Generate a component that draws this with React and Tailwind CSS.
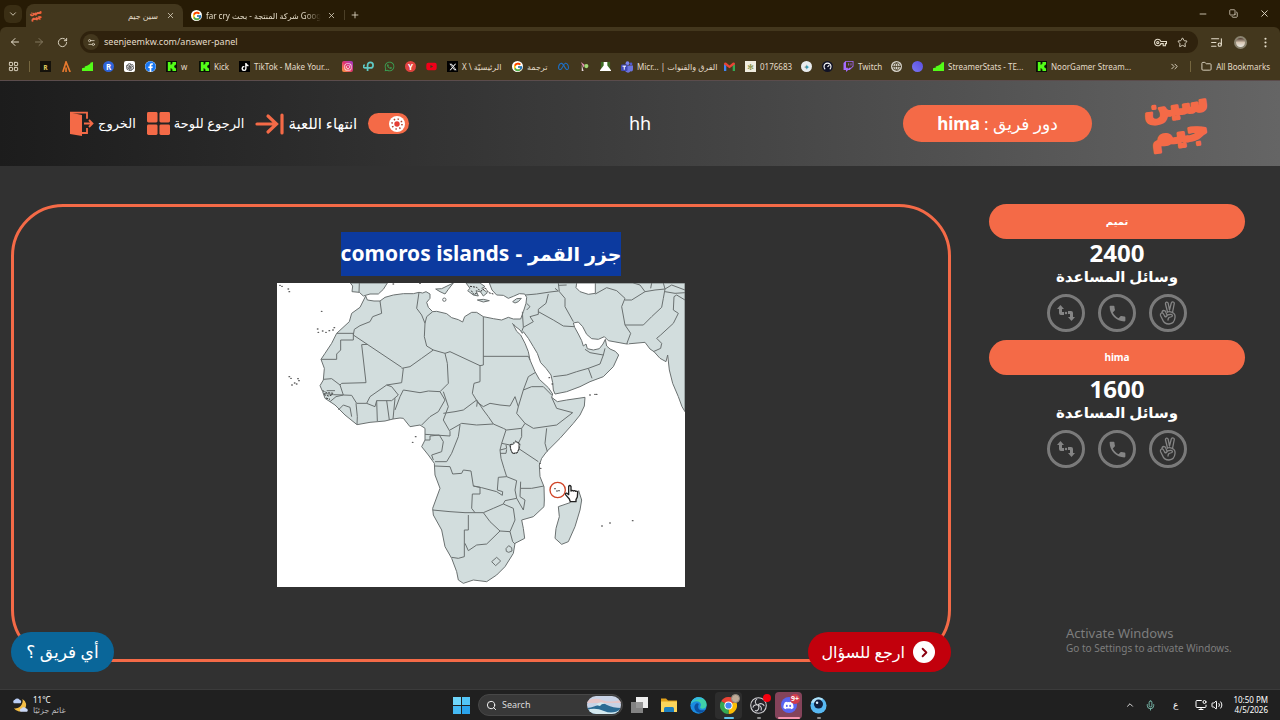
import {
	ArrowLeft,
	ArrowRight,
	ChevronDown,
	ChevronRight,
	ChevronUp,
	ChevronsRight,
	Copy,
	EllipsisVertical,
	Folder,
	Globe,
	LayoutGrid,
	ListMusic,
	Mic,
	Minus,
	MonitorDot,
	Plus,
	RotateCw,
	Search,
	Settings2,
	Star,
	Volume2,
	X,
} from 'lucide-react'
import React, { useState } from 'react'
import { AiOutlineOpenAI } from 'react-icons/ai'
import { FaDiscord, FaFacebook, FaTiktok, FaTwitch, FaWhatsapp, FaYoutube } from 'react-icons/fa'
import { FaInstagram, FaMeta, FaXTwitter } from 'react-icons/fa6'
import { FcGoogle } from 'react-icons/fc'
import { MdOutlineVpnKey, MdPhone } from 'react-icons/md'

/* ---------- small brand icons ---------- */

const KickIcon = () => (
	<svg viewBox="0 0 12 12" className="h-[11px] w-[11px] shrink-0">
		<rect width="12" height="12" fill="#0a0f06" />
		<path d="M2 1h3v3h1V3h1V1h4v3h-1v1H9v2h1v1h1v3H7V9H6V8H5v3H2z" fill="#53fc18" />
	</svg>
)

const StatsIcon = () => (
	<svg viewBox="0 0 12 12" className="h-[11px] w-[11px] shrink-0">
		<path d="M0 8l3-1v4H0zM3 6l3-1v6H3zM6 5l3-2v8H6zM9 2l3-1v10H9z" fill="#53fc18" />
	</svg>
)

const TeamsIcon = () => (
	<svg viewBox="0 0 12 12" className="h-[12px] w-[12px] shrink-0">
		<circle cx="6.500" cy="2.200" r="1.900" fill="#7b83eb" />
		<circle cx="10" cy="3" r="1.400" fill="#5059c9" />
		<path d="M4 4.500h8v4a2 2 0 0 1-2.500 1.800A3 3 0 0 1 4 9z" fill="#6b73dd" />
		<rect y="3.500" width="6.500" height="6.500" rx="1" fill="#4048b5" />
		<path d="M1.500 5.200h3.500M3.250 5.200v3.500" stroke="#fff" />
	</svg>
)

const GmailIcon = () => (
	<svg viewBox="0 0 12 12" className="h-[11px] w-[11px] shrink-0">
		<path d="M0 3v8h2.500V5z" fill="#4285f4" />
		<path d="M12 3v8H9.500V5z" fill="#34a853" />
		<path d="M0 3.500V3q.5-2 2.500-1L6 4.800 9.500 2Q11.500 1 12 3v.5L6 8z" fill="#ea4335" />
	</svg>
)

const ChromeIcon = () => (
	<svg viewBox="0 0 24 24" className="h-[17px] w-[17px]">
		<path d="M12 12L1.600 6A12 12 0 0 1 22.400 6z" fill="#ea4335" />
		<path d="M12 12L22.400 6A12 12 0 0 1 12 24z" fill="#fbbc05" />
		<path d="M12 12L12 24A12 12 0 0 1 1.600 6z" fill="#34a853" />
		<circle cx="12" cy="12" r="5.800" fill="#fff" />
		<circle cx="12" cy="12" r="4.400" fill="#4285f4" />
	</svg>
)

const EdgeIcon = () => (
	<svg viewBox="0 0 24 24" className="h-[17px] w-[17px]">
		<circle cx="12" cy="12" r="11.500" fill="#1a8be0" />
		<path d="M1 10C3 2 9 .5 12 .5c7 0 11.500 5 11.500 10 0 4-3 6-6 6-2.500 0-3.500-1.500-3-2.500 3-4-1-8-5-8-4 0-7 2-8.500 4z" fill="#3fd0a8" />
		<path d="M1 10C3 3 8 .5 12 .5c3 0 6 1 8 3-6-2-14 0-19 6.500z" fill="#35b8e6" />
		<path d="M9 9c-5 3-3 11 3 13 4 1 8-1 9.500-4-5 2-10 0-10-4 0-2 .5-3 1-4-1-1-2-1.500-3.500-1z" fill="#0c4f9f" />
	</svg>
)

const ExplorerIcon = () => (
	<svg viewBox="0 0 18 16" className="h-[16px] w-[18px]">
		<path d="M1 1.500h5l2 2h9V15H1z" fill="#e3a21a" />
		<path d="M1 4.500h16V15H1z" fill="#fbd55c" />
		<path d="M4 15v-3.500Q4 10 5.500 10h7q1.500 0 1.500 1.500V15z" fill="#1d7fbf" />
	</svg>
)

const ObsIcon = () => (
	<svg viewBox="0 0 24 24" className="h-[17px] w-[17px]">
		<circle cx="12" cy="12" r="11" fill="#24242a" stroke="#d5d5d8" strokeWidth="1.500" />
		<path d="M10 3c-4 2-3 7 1 8.500M20 13c-1-4-6-5-9-1.500M7 19c4 2 7-3 4.500-7.500M12 12c3 0 5 3 3.500 7M12 12C9 10 5 11 4 15" fill="none" stroke="#d5d5d8" strokeWidth="1.500" />
	</svg>
)

const WeatherIcon = () => (
	<svg viewBox="0 0 18 18" className="h-[17px] w-[17px]">
		<path d="M11 2a7 7 0 1 1-9 10 8 8 0 0 0 9-10z" fill="#f3bd45" />
		<path d="M2 6.500a2 2 0 0 1 1-3.500 3 3 0 0 1 5 0 2 2 0 0 1 1 3.500z" fill="#b9cdf5" />
		<path d="M9 15.500a1.800 1.800 0 0 1 1-3.200 3 3 0 0 1 5 0 1.800 1.800 0 0 1 1 3.200z" fill="#cbd9f7" />
	</svg>
)

const Logo = ({ className }) => (
	<svg viewBox="0 0 66 66" className={`overflow-visible ${className}`} role="img" aria-label="سين جيم">
		<g transform="rotate(-8 33 33)" fill="#f46a47" stroke="#f46a47" strokeWidth="3" strokeLinejoin="round">
			<text x="33" y="23" fontSize="28" fontWeight="700" textAnchor="middle" fontFamily="DejaVu Sans, sans-serif">
				سين
			</text>
			<text x="33" y="51" fontSize="30" fontWeight="700" textAnchor="middle" fontFamily="DejaVu Sans, sans-serif">
				جيم
			</text>
		</g>
	</svg>
)

/* ---------- browser ---------- */

const RoundBadge = ({ className, children }) => (
	<span className={`flex h-[11px] w-[11px] shrink-0 items-center justify-center text-[8px] leading-none font-bold ${className}`}>
		{children}
	</span>
)

const bookmarks = [
	{ name: 'Rewards', icon: <RoundBadge className="bg-[#15120b] text-[#d9c15a]">ʀ</RoundBadge> },
	{
		name: 'Arc',
		icon: (
			<svg viewBox="0 0 12 12" className="h-[11px] w-[11px]">
				<path d="M2 12L5.500 1l4.500 11M5.500 12V7" fill="none" stroke="#e8792e" strokeWidth="1.800" />
			</svg>
		),
	},
	{ name: 'Stats', icon: <StatsIcon /> },
	{ name: 'R', icon: <RoundBadge className="rounded-full bg-[#2e63d8] text-white">R</RoundBadge> },
	{ name: 'ChatGPT', icon: <RoundBadge className="rounded-xs bg-white text-[10px] text-[#222]"><AiOutlineOpenAI /></RoundBadge> },
	{ name: 'Facebook', icon: <RoundBadge className="rounded-full bg-white text-[11px] text-[#1877f2]"><FaFacebook /></RoundBadge> },
	{ name: 'w', text: 'w', width: 'w-[8px]', icon: <KickIcon /> },
	{ name: 'Kick', text: 'Kick', width: 'w-[15px]', icon: <KickIcon /> },
	{ name: 'TikTok', text: 'TikTok - Make Your...', width: 'w-[78px]', icon: <RoundBadge className="bg-black text-white"><FaTiktok /></RoundBadge> },
	{ name: 'Instagram', icon: <RoundBadge className="rounded-xs bg-linear-to-tr from-[#fd9a2b] via-[#e1306c] to-[#9b30c9] text-white"><FaInstagram /></RoundBadge> },
	{
		name: 'P',
		icon: (
			<svg viewBox="0 0 12 12" className="h-[11px] w-[11px]">
				<path d="M5 11V4.500A3 3 0 1 1 8 7.500H2a1.500 1.500 0 0 1 0-3" fill="none" stroke="#5fc9c4" strokeWidth="1.900" />
			</svg>
		),
	},
	{ name: 'WhatsApp', icon: <FaWhatsapp className="h-[11px] w-[11px] text-[#3aa757]" /> },
	{ name: 'Y', icon: <RoundBadge className="rounded-full bg-[#e0433f] text-white">Y</RoundBadge> },
	{ name: 'YouTube', icon: <FaYoutube className="h-[11px] w-[11px] text-[#f00019]" /> },
	{ name: 'X', text: 'X \\ الرئيسيّة', width: 'w-[40px]', icon: <RoundBadge className="bg-black text-white"><FaXTwitter /></RoundBadge> },
	{ name: 'Translate', text: 'ترجمة', width: 'w-[21px]', icon: <RoundBadge className="rounded-full bg-white text-[10px]"><FcGoogle /></RoundBadge> },
	{ name: 'Meta', icon: <FaMeta className="h-[11px] w-[11px] text-[#1d6fc4]" /> },
	{
		name: 'Plant',
		icon: (
			<svg viewBox="0 0 12 12" className="h-[11px] w-[11px]">
				<path d="M2 1l4 3-1 3z" fill="#e58fb5" />
				<circle cx="8" cy="5.500" r="2.300" fill="#a3d977" />
				<path d="M3 4l2 7H3z" fill="#e9d9e0" />
			</svg>
		),
	},
	{
		name: 'Garden',
		icon: (
			<svg viewBox="0 0 12 12" className="h-[11px] w-[11px]">
				<path d="M1 1h10v10H1z" fill="#3c6b22" />
				<path d="M4 1h4v4l4 5v1H0v-1l4-5z" fill="#fff" />
			</svg>
		),
	},
	{ name: 'Teams', text: 'Micr... | الفرق والقنوات', width: 'w-[77px]', icon: <TeamsIcon /> },
	{ name: 'Gmail', icon: <GmailIcon /> },
	{ name: '0176683', text: '0176683', width: 'w-[31px]', icon: <RoundBadge className="bg-[#f0ecdf] text-[#7c8a35]">✻</RoundBadge> },
	{ name: 'School', icon: <RoundBadge className="rounded-full bg-[#e9ecee] text-[#3c94a3]">✦</RoundBadge> },
	{
		name: 'Speed',
		icon: (
			<svg viewBox="0 0 12 12" className="h-[11px] w-[11px]">
				<circle cx="6" cy="6" r="6" fill="#111326" />
				<path d="M3.500 9A3.800 3.800 0 1 1 8.500 9M6 6.500L8 4.500" fill="none" stroke="#fff" strokeWidth="1.200" />
			</svg>
		),
	},
	{ name: 'Twitch', text: 'Twitch', width: 'w-[23px]', icon: <FaTwitch className="h-[11px] w-[11px] shrink-0 text-[#a56bff]" /> },
	{ name: 'Web', icon: <RoundBadge className="rounded-full bg-[#d5d2ca] text-[#3f3419]"><Globe size={9} /></RoundBadge> },
	{ name: 'Sphere', icon: <RoundBadge className="rounded-full bg-linear-to-bl from-[#5a4de0] to-[#7b76f2]" /> },
	{ name: 'StreamerStats', text: 'StreamerStats - TE...', width: 'w-[78px]', icon: <StatsIcon /> },
	{ name: 'NoorGamer', text: 'NoorGamer Stream...', width: 'w-[82px]', icon: <KickIcon /> },
]

const Browser = () => (
	<header className="bg-[#271b05] font-['Noto_Sans','DejaVu_Sans',sans-serif] text-[9px] text-[#e4dcc9]">
		<div className="flex h-[27px] items-end">
			<button aria-label="Search tabs" className="mb-1 ml-1 flex h-[18px] w-[18px] items-center justify-center rounded-md bg-[#3a2e14]">
				<ChevronDown size={10} />
			</button>
			<div className="ml-1 flex h-[23px] w-[157px] items-center rounded-t-lg bg-[#43371d] px-1">
				<Logo className="h-[12px] w-[12px]" />
				<span dir="rtl" className="ml-auto text-[8px]">سين جيم</span>
				<button aria-label="Close tab" className="mr-1 ml-2">
					<X size={9} />
				</button>
			</div>
			<div className="flex h-[23px] w-[153px] items-center pl-2">
				<RoundBadge className="rounded-full bg-white text-[10px]">
					<FcGoogle />
				</RoundBadge>
				<span className="ml-1 mask-r-from-85% text-[8px] whitespace-nowrap">far cry شركة المنتجة - بحث Goog</span>
				<button aria-label="Close tab" className="ml-auto">
					<X size={9} />
				</button>
			</div>
			<button aria-label="New tab" className="mb-[7px] ml-2 border-l border-[#4b3f27] pl-[5px]">
				<Plus size={10} />
			</button>
			<div className="mr-[10px] mb-2 ml-auto flex gap-[21px]">
				<button aria-label="Minimize"><Minus size={10} /></button>
				<button aria-label="Restore"><Copy size={9} className="rotate-90 -scale-x-100" /></button>
				<button aria-label="Close"><X size={11} /></button>
			</div>
		</div>

		<div className="rounded-t-md bg-[#43371d] pt-1">
			<div className="flex h-[22px] items-center pr-2 pl-[9px]">
				<button aria-label="Back" className="mr-3"><ArrowLeft size={12} /></button>
				<button aria-label="Forward" className="mr-3 text-[#83785f]"><ArrowRight size={12} /></button>
				<button aria-label="Reload" className="mr-3"><RotateCw size={11} /></button>
				<div className="flex h-[22px] flex-1 items-center rounded-full bg-[#2f220d] pr-[10px] pl-[3px]">
					<span className="flex h-[16px] w-[16px] items-center justify-center rounded-full bg-[#43371d]">
						<Settings2 size={9} />
					</span>
					<input
						aria-label="Address"
						className="ml-[5px] flex-1 bg-transparent text-[9px] outline-none"
						defaultValue="seenjeemkw.com/answer-panel"
					/>
					<MdOutlineVpnKey size={13} className="mr-[10px]" />
					<Star size={11} />
				</div>
				<ListMusic size={13} className="mr-[11px] ml-3" />
				<span className="mr-3 h-[13px] w-[13px] rounded-full border-2 border-[#8b8470] bg-linear-to-b from-[#4e3b30] via-[#d8c6b2] to-[#e9e9e4]" />
				<EllipsisVertical size={13} />
			</div>
			<nav className="flex h-[27px] items-center gap-[10px] pr-[10px] pl-2">
				<LayoutGrid size={11} className="shrink-0" />
				<span className="h-[11px] w-px bg-[#75663f]" />
				{bookmarks.map((item) => (
					<a key={item.name} href="#" aria-label={item.name} className="flex shrink-0 items-center gap-1">
						{item.icon}
						{item.text && <span className={`text-[8px] whitespace-nowrap ${item.width}`}>{item.text}</span>}
					</a>
				))}
				<ChevronsRight size={11} className="ml-auto shrink-0" />
				<span className="h-[11px] w-px bg-[#75663f]" />
				<a href="#" className="flex shrink-0 items-center gap-1 text-[8px] whitespace-nowrap">
					<Folder size={11} />
					All Bookmarks
				</a>
			</nav>
		</div>
	</header>
)

/* ---------- game header ---------- */

const GameHeader = ({ team }) => {
	const [light, setLight] = useState(true)

	return (
		<div className="grid h-[86px] grid-cols-[1fr_auto_1fr] items-center border-t border-[#5b4c4c] bg-linear-to-r from-[#1c1c1c] to-[#656565] px-[69px]">
			<div className="flex items-center gap-[11px] text-[13px] whitespace-nowrap text-white">
				<a href="#" className="flex items-center gap-1">
					<svg viewBox="0 0 25 25" className="h-[25px] w-[25px]">
						<path d="M1 1.500L13 4v21L1 23z" fill="#f46a47" />
						<path d="M1 1.700h17v6M12 22h6v-5" fill="none" stroke="#f46a47" strokeWidth="1.800" />
						<path d="M15 12.500h8M20 9l3.500 3.500L20 16" fill="none" stroke="#f46a47" strokeWidth="1.800" />
					</svg>
					الخروج
				</a>
				<a href="#" className="flex items-center gap-1">
					<svg viewBox="0 0 24 24" className="h-[23px] w-[23px]" fill="#f46a47">
						<rect width="11" height="11" rx="1.500" />
						<rect x="13" width="11" height="11" rx="1.500" />
						<rect y="13" width="11" height="11" rx="1.500" />
						<rect x="13" y="13" width="11" height="11" rx="1.500" />
					</svg>
					الرجوع للوحة
				</a>
				<a href="#" className="flex items-center gap-1 text-[15px]">
					<svg viewBox="0 0 29 22" className="h-[22px] w-[29px]" fill="none" stroke="#f46a47" strokeWidth="3.200" strokeLinecap="round">
						<path d="M2 11h19M13 3l8.500 8-8.500 8M27 2v18" />
					</svg>
					انتهاء اللعبة
				</a>
				<label className={`flex h-[21px] w-[41px] cursor-pointer items-center rounded-full bg-[#f46a47] px-1 ${light ? 'justify-end' : ''}`}>
					<input type="checkbox" aria-label="Theme" className="sr-only" checked={light} onChange={() => setLight(!light)} />
					<svg viewBox="0 0 16 16" className="h-[16px] w-[16px]">
						<circle cx="8" cy="8" r="8" fill="#fff" />
						<circle cx="8" cy="8" r="2.700" fill="#e53d33" />
						<circle cx="8" cy="8" r="5" fill="none" stroke="#b0442e" strokeWidth="1.600" strokeDasharray="1.400 2.527" />
					</svg>
				</label>
			</div>
			<h1 className="text-[18px] text-white">hh</h1>
			<div className="flex items-center justify-end gap-[53px]">
				<div dir="rtl" className="flex h-[37px] w-[189px] items-center justify-center gap-1 rounded-full bg-[#f46a47] text-[17px] text-white">
					دور فريق : <strong>{team}</strong>
				</div>
				<Logo className="h-[66px] w-[66px]" />
			</div>
		</div>
	)
}

/* ---------- map ---------- */

const land = [
	// Africa, the Middle East and south Asia in one outline
	'M287 228L292 240 312 243 330 243 345 232 370 225 400 221 430 221 447 217 458 219 468 215 480 222 480 235 470 247 475 262 488 275 500 274 530 281 545 293 565 299 578 306 584 290 605 277 620 277 640 290 670 296 695 300 715 292 730 297 752 297 760 275 768 250 770 232 764 222 748 221 730 229 715 235 700 226 680 225 666 210 658 189H1245V575L1236 560 1225 530 1208 490 1198 450 1193 405 1188 425 1170 415 1152 395 1140 387 1125 367 1070 372 1015 362 1003 350 985 358 965 356 950 343 938 320 925 306 910 309 914 322 925 342 935 362 940 378 948 372 952 386 970 390 988 386 999 372 1006 358 1010 378 1020 387 1036 394 1046 405 1030 440 1000 470 960 485 930 500 890 515 855 522 850 510 848 488 843 465 828 445 812 428 802 400 790 380 775 355 760 335 757 340 750 330 737 320 728 310 740 334 752 345 765 370 775 395 780 420 795 455 808 478 835 503 848 522 845 532 862 545 890 540 945 532 943 558 930 585 910 610 870 655 830 695 815 715 808 735 810 770 822 800 823 840 822 860 790 890 755 900 760 925 764 955 735 970 730 1000 705 1040 680 1065 650 1085 610 1080 580 1090 565 1080 560 1055 545 1015 525 980 515 930 490 885 488 865 510 805 495 765 493 730 475 705 455 680 465 660 465 625 450 615 420 620 400 595 390 594 369 597 345 603 300 607 261 614 225 585 195 555 180 545 165 535 158 515 150 497 160 480 163 445 153 418 165 400 185 370 200 340 238 305 245 280 270 262Z',
	'M241 189L248 198 246 215 268 217 280 228 300 222 325 222 340 208 352 189Z',
	'M926 812L935 840 930 870 915 920 895 965 875 973 855 955 858 925 868 890 865 860 900 848 920 820Z',
	'M497 207L515 206 550 189 535 208 525 222 510 215Z',
	'M588 189L600 205 593 212 610 225 625 228 618 212 632 216 640 228 652 218 635 205 645 200 630 189Z',
	'M622 240L640 238 658 242 640 246ZM728 245L740 236 754 235 745 245 735 249Z',
]

const water = [
	'M920 189L918 203 930 215 955 223 976 220 976 189Z',
	'M720 675L730 673 737 665 750 672 748 684 742 698 728 700 722 690Z',
]

const borders = [
	'M330 243L335 280 308 290 300 305 270 317 253 328 250 345 395 442',
	'M200 340H250V360H212V390L200 402V418H153',
	'M395 445L420 440 455 415 490 390 525 400 540 395 630 437 640 435V290M640 409H775',
	'M490 390L470 378 463 350 465 310 455 285 440 265 447 217M465 310L470 290 488 275',
	'M292 373L275 374 288 488 215 490 210 495 185 476 160 478',
	'M210 495L220 525 190 524 160 520M170 512H195M220 525L245 526 260 550 290 550 300 530 350 495 395 488 400 445',
	'M290 550L315 560 320 542 365 542 385 525 365 500 350 495M320 542L322 603M350 542L358 600M375 535L369 597M258 550L262 590 261 613M205 570L220 555 240 562 245 590M180 545L198 530 220 525',
	'M375 570L390 530 400 510 450 518 475 513 510 515 535 490 532 430 525 400M510 515L525 540 505 575 480 590 455 615M520 515L535 560 520 600 540 635 540 648 465 643',
	'M520 580L555 575 580 570 620 540 640 570 655 590 670 612 620 615 575 610 540 630M630 437V485L612 490 607 520 622 545 620 560M620 545L640 560 660 550 690 555 720 558 735 530 745 560',
	'M745 560L740 580 765 610 790 625 825 620 860 615 908 578 860 565 845 532M745 560L760 510 785 500 820 500 845 525M760 510L775 470 795 458',
	'M670 612L700 625 710 630 755 625 765 610M755 625L755 650 745 670M830 625L825 670 832 695M745 685L805 725M708 630L695 670 690 690 693 715 702 745 710 770M690 690L710 685 708 675M690 700L708 700 710 688M695 670L720 675',
	'M710 770L685 772 682 810 698 815 697 826 680 815 635 803 610 798M710 770L740 782 735 810 740 835 760 870 765 840 750 830 752 785M752 805L785 805 822 798M740 835L705 842 700 852',
	'M495 738L540 740 548 762 575 760 580 750 603 753 610 798 630 802V822H607L605 865 615 878M495 725L530 725 545 700 565 650 570 615M465 660H480V648L508 645 520 665 515 695 485 705 490 720',
	'M488 870L540 875 585 878 640 878 670 865 700 852 730 865 735 900 720 935 690 933 660 905 640 878M595 885V930H583V1010L565 1015 545 1012M585 970L595 992 620 975 650 972 690 933M720 935L728 965 735 972',
	'M665 1025L680 1012 692 1023 677 1037ZM708 986l8-9 9 6 1 10-10 4-7-3Z',
	'M766 225L800 222 840 216 865 213M835 222L828 250 805 268 805 283 780 290 790 305 760 322M770 270L780 260 770 250M805 275L850 300 880 318 912 320M865 189L868 215 885 235 885 260 910 305M757 275L760 322 755 335',
	'M976 222L1010 203 1040 212 1065 235 1055 260 1065 315 1082 340 1070 372M1065 315L1120 315 1145 290 1175 262 1180 235 1185 207 1155 210 1125 215 1085 240 1065 240',
	'M1245 240L1220 225 1212 230 1210 270 1225 280 1210 310 1172 345 1160 355 1175 370 1172 385 1150 395M1125 215L1110 195 1090 189M1185 215L1215 220 1245 218M1185 207L1205 195 1245 210M1180 189L1185 207M890 195L865 196M1145 189L1142 205',
	'M850 470L890 465 920 455 955 445 990 432 1000 405 1005 385M955 445L966 475M945 388L960 398 1000 405M268 189L267 217M775 409L780 420M855 205L865 213',
]

// small islands
const specks = [
	[30, 196], [36, 199], [55, 207], [58, 215], [155, 274], [143, 327], [145, 337], [158, 333], [168, 337], [178, 332], [189, 330], [193, 323],
	[58, 470], [63, 475], [84, 476], [87, 482], [66, 495], [80, 492], [74, 489], [437, 650], [428, 667], [975, 523], [960, 525], [980, 523],
	[996, 918], [1020, 909], [1088, 902], [810, 730], [812, 745], [370, 192], [450, 190], [838, 473], [847, 492], [855, 806], [861, 813], [867, 812],
]

const AfricaMap = () => (
	<svg viewBox="21 189 1224 912" role="img" aria-label="خريطة" className="block w-full max-w-[408px] bg-white">
		{/* roughens the coast and border lines */}
		<filter id="rough" filterUnits="userSpaceOnUse" x="21" y="180" width="1230" height="925">
			<feTurbulence type="fractalNoise" baseFrequency="0.15" numOctaves="2" seed="4" />
			<feDisplacementMap in="SourceGraphic" scale="4" xChannelSelector="R" yChannelSelector="G" />
		</filter>
		<g filter="url(#rough)" stroke="#6a7070" strokeWidth="3" strokeLinejoin="round" fill="#d2dddd">
			{land.map((d) => (
				<path key={d} d={d} />
			))}
			<g fill="#fff">
				{water.map((d) => (
					<path key={d} d={d} />
				))}
			</g>
			<g fill="none">
				{borders.map((d) => (
					<path key={d} d={d} />
				))}
			</g>
			<circle cx="523" cy="239" r="5" fill="#fff" />
		</g>
		<path d="M720 675l8-4 9-8 12 8-4 6 3 8-7 14-13 2-5-12zM158 512l12 6 22 2M162 524l14 4 12-4M168 534l12 4M600 199l20 3 12 12 14-10 10 14 14 4M604 212l8 12 10-6" fill="none" stroke="#333" strokeWidth="3" strokeDasharray="6 3" />
		{specks.map(([x, y]) => (
			<ellipse key={`${x}-${y}`} cx={x} cy={y} rx="3" ry="2" fill="#555" />
		))}
		<circle cx="863" cy="810" r="23" fill="none" stroke="#cf4326" strokeWidth="4" />
		{/* pointer hand */}
		<path
			d="M896 799q3-5 7 0v14q3-4 7 0 4-3 7 1 5-2 6 3l-1 14-4 8v6h-17l-3-8-12-14q2-6 7-2l3 3z"
			fill="#fff"
			stroke="#222"
			strokeWidth="4"
			strokeLinejoin="round"
		/>
	</svg>
)

/* ---------- sidebar ---------- */

const SwapIcon = () => (
	<svg viewBox="0 0 18 18" className="h-[18px] w-[18px]" fill="#858585">
		<path d="M3.500 1L7 5H5v3h2v3H4Q2 11 2 9V5H0z" />
		<path d="M14.500 17L11 13h2v-3h-2V7h3q2 0 2 2v4h2z" />
		<circle cx="9" cy="9" r="1.200" />
	</svg>
)

const PeaceIcon = () => (
	<svg viewBox="0 0 18 24" className="h-[24px] w-[18px]" fill="none" stroke="#858585" strokeLinecap="round" strokeLinejoin="round">
		<path d="M8.500 11L6.500 3Q6.300 1.300 7.500 1.100T9.200 2.300L10.500 9 12.300 2Q13 .6 14.300 1T15.200 2.800L13.500 11.500" strokeWidth="1.300" />
		<path d="M13.500 11.500Q16.500 13 16 16.500 15.500 22.500 10 23 5 23 3.500 18.500L1.500 14.500Q1 12.500 2.500 12T4.800 13.500L6 15.500" strokeWidth="1.300" />
		<path d="M3 11.800Q3 9.500 4.800 9.500T7 11.500L7.800 13.500M7 15.500Q9 13 12.500 13.500 14 14 13 15.500L10 16.500Q9 17.500 9 19M6 15.500Q7 16.500 8 15M8.500 11Q10.500 10 13.500 11.500" strokeWidth="1.300" />
	</svg>
)

const helpers = [
	{ name: 'Swap', icon: <SwapIcon /> },
	{ name: 'Call', icon: <MdPhone className="h-[21px] w-[21px]" /> },
	{ name: 'Two answers', icon: <PeaceIcon /> },
]

const TeamCard = ({ name, score }) => (
	<section className="mb-2 flex flex-col items-center text-white">
		<h3 className="flex h-[35px] w-full items-center justify-center rounded-full bg-[#f46a47] text-[10px] font-bold">{name}</h3>
		<p className="text-[24px] leading-[28px] font-bold">{score}</p>
		<p className="text-[15px] leading-[18px] font-bold">وسائل المساعدة</p>
		<div className="mt-[9px] flex gap-[13px]">
			{helpers.map((helper) => (
				<button
					key={helper.name}
					aria-label={helper.name}
					className="flex h-[38px] w-[38px] items-center justify-center rounded-full border-3 border-[#7a7a7a] text-[#858585]"
				>
					{helper.icon}
				</button>
			))}
		</div>
	</section>
)

/* ---------- taskbar ---------- */

const Taskbar = () => (
	<footer className="grid h-[31px] grid-cols-[1fr_auto_1fr] items-center border-t border-[#3b3b3b] bg-[#202020] pr-3 pl-3 font-['Noto_Sans','DejaVu_Sans',sans-serif] text-[8px] leading-[10px] text-white">
		<div className="flex items-center gap-1">
			<WeatherIcon />
			<div>
				<p>11°C</p>
				<p className="text-[#b9b9b9]">غائم جزئيًا</p>
			</div>
		</div>
		<div className="flex items-center gap-3">
			<button aria-label="Start" className="grid grid-cols-2 gap-px">
				<span className="h-[8px] w-[8px] bg-[#6fd6fb]" />
				<span className="h-[8px] w-[8px] bg-[#52c5f7]" />
				<span className="h-[8px] w-[8px] bg-[#45b9f3]" />
				<span className="h-[8px] w-[8px] bg-[#2aa3ec]" />
			</button>
			<label className="-ml-1 flex h-[22px] w-[145px] items-center rounded-full border border-[#474747] bg-[#383838] pr-px pl-[7px]">
				<Search size={11} />
				<input type="text" placeholder="Search" aria-label="Search" className="ml-[5px] w-0 flex-1 bg-transparent text-[9px] outline-none placeholder:text-[#dcdcdc]" />
				<svg viewBox="0 0 34 18" className="h-[18px] w-[34px]">
					<clipPath id="wave">
						<rect width="34" height="18" rx="9" />
					</clipPath>
					<g clipPath="url(#wave)">
						<rect width="34" height="18" fill="#c9d3e6" />
						<path d="M0 5q8-4 15-1t19 0v3H0z" fill="#e6c6c8" />
						<path d="M0 12q8-1 12-4 4-2 8 1 6 3 14 3v6H0z" fill="#2c6b94" />
						<path d="M9 9q4-5 10-1-4-1-6 2zM0 14q8-3 17 1t17-2v5H0z" fill="#d4e8ee" />
					</g>
				</svg>
			</label>
			<button aria-label="Task view" className="relative -ml-1 h-[16px] w-[17px]">
				<span className="absolute top-0 right-0 h-[11px] w-[12px] bg-[#eee]" />
				<span className="absolute bottom-0 left-0 h-[11px] w-[12px] bg-[#8d8d8d]/90" />
			</button>
			<button aria-label="Files"><ExplorerIcon /></button>
			<button aria-label="Edge"><EdgeIcon /></button>
			<button aria-label="Chrome" className="relative -mx-1 flex h-[27px] w-[27px] items-center justify-center rounded-sm bg-[#2d2d2d]">
				<ChromeIcon />
				<span className="absolute top-[2px] right-[2px] h-[9px] w-[9px] rounded-full border border-[#8f8a80] bg-[#c0ab97]" />
				<span className="absolute bottom-0 h-[2px] w-[10px] rounded-full bg-[#62c3ee]" />
			</button>
			<button aria-label="OBS" className="relative flex h-[27px] items-center">
				<ObsIcon />
				<span className="absolute top-[2px] -right-1 h-[8px] w-[8px] rounded-full bg-[#f5000f]" />
				<span className="absolute bottom-0 left-[7px] h-[2px] w-[4px] rounded-full bg-[#8e8e8e]" />
			</button>
			<button aria-label="Discord" className="relative -mx-1 flex h-[27px] w-[27px] items-center justify-center rounded-sm bg-[#84435a]">
				<span className="flex h-[16px] w-[16px] items-center justify-center rounded-full bg-[#5865f2]">
					<FaDiscord size={11} />
				</span>
				<span className="absolute top-[2px] right-[2px] flex h-[10px] w-[10px] items-center justify-center rounded-full bg-[#d13b4d] text-[7px] font-bold">9+</span>
				<span className="absolute bottom-0 h-[2px] w-[22px] rounded-full bg-[#f794ad]" />
			</button>
			<button aria-label="Camera" className="relative flex h-[27px] items-center">
				<svg viewBox="0 0 18 18" className="h-[17px] w-[17px]">
					<circle cx="9" cy="9" r="8.500" fill="#58b9f3" />
					<path d="M1 6a8.500 8.500 0 0 1 13-4L9 6z" fill="#b2e4fb" />
					<circle cx="9" cy="7.500" r="4.800" fill="#10203f" />
					<circle cx="7.500" cy="6" r="1.300" fill="#dff2ff" />
				</svg>
				<span className="absolute bottom-0 left-[7px] h-[2px] w-[4px] rounded-full bg-[#8e8e8e]" />
			</button>
		</div>
		<div className="flex items-center justify-end">
			<ChevronUp size={10} className="mr-[10px]" />
			<Mic size={11} className="mr-[17px] text-[#7fc4b5]" />
			<span className="mr-[17px] text-[9px]">ع</span>
			<MonitorDot size={12} className="mr-1" />
			<Volume2 size={12} className="mr-[10px]" />
			<div className="text-right">
				<p>10:50 PM</p>
				<p>4/5/2026</p>
			</div>
		</div>
	</footer>
)

const App = () => {
	return (
		<div className="flex min-h-screen flex-col bg-[#313131] font-['Noto_Sans','DejaVu_Sans',sans-serif]">
			<Browser />
			<GameHeader team="hima" />

			<main className="flex flex-1 gap-[38px] pt-[38px] pr-[35px] pb-[27px] pl-[11px]">
				<div className="relative flex flex-1 flex-col items-center rounded-[52px] border-3 border-[#f46a47] px-4 pt-[25px]">
					<h2 dir="rtl" className="mb-[7px] flex h-[44px] items-center gap-[6px] bg-[#0c3a9f] text-[21px] font-bold text-white">
						<span className="text-[19px]">جزر القمر</span>
						<span>-</span>
						<span dir="ltr">comoros islands</span>
					</h2>
					<AfricaMap />
					<button dir="rtl" className="absolute -bottom-[13px] -left-[3px] h-[40px] w-[103px] rounded-full bg-[#0a6699] text-[17px] text-white">
						أي فريق ؟
					</button>
					<button
						dir="rtl"
						className="absolute -right-[3px] -bottom-[13px] flex h-[40px] w-[143px] items-center gap-2 rounded-full bg-[#c2000c] pr-4 text-[16px] text-white"
					>
						<span className="flex h-[22px] w-[22px] items-center justify-center rounded-full bg-white text-[#8b0010]">
							<ChevronRight size={15} strokeWidth={3} />
						</span>
						ارجع للسؤال
					</button>
				</div>

				<aside className="flex w-[256px] flex-col">
					<TeamCard name="تميم" score={2400} />
					<TeamCard name="hima" score={1600} />
					<div className="mt-auto ml-[77px] pb-[7px] whitespace-nowrap text-[#7d7d7d]">
						<p className="text-[13px] leading-[17px]">Activate Windows</p>
						<p className="text-[10px] leading-[13px]">Go to Settings to activate Windows.</p>
					</div>
				</aside>
			</main>

			<Taskbar />
		</div>
	)
}

export default App
